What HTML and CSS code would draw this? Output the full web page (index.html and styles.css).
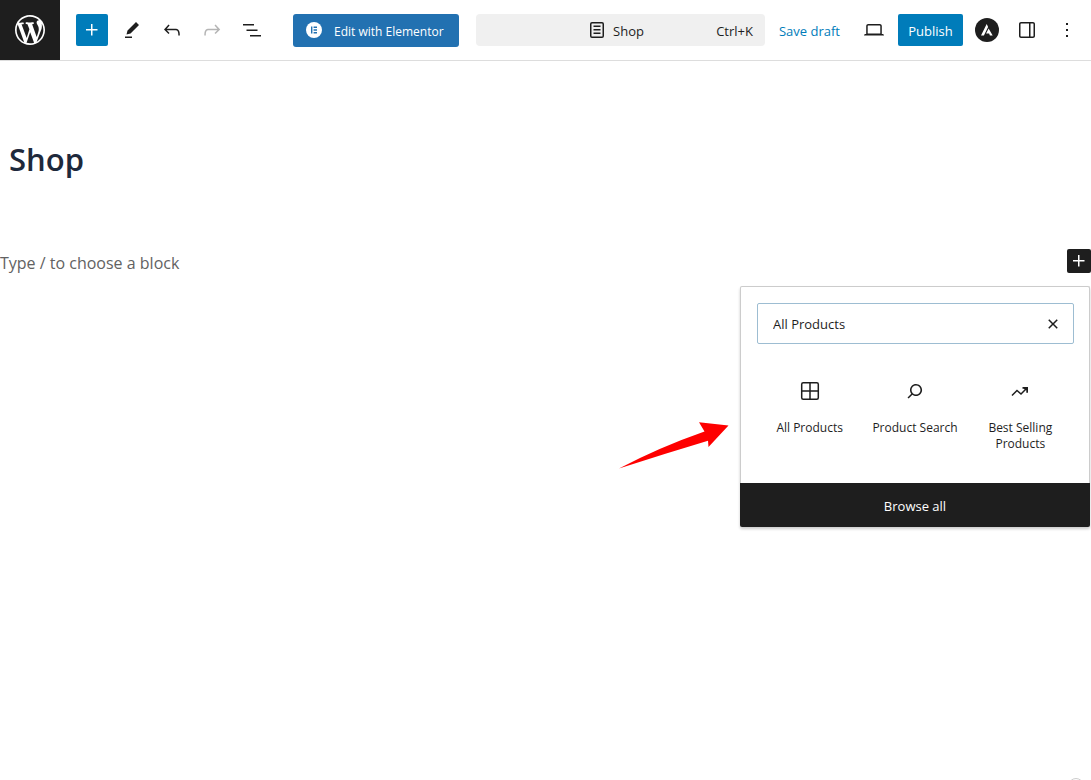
FILE: index.html
```html
<!DOCTYPE html>
<html lang="en">
<head>
<meta charset="utf-8">
<title>Shop</title>
<link rel="stylesheet" href="styles.css">
</head>
<body>
<div class="editor">
  <header class="header">
    <a class="site-link" href="#" aria-label="View pages">
      <svg width="36" height="36" viewBox="-2 -2 24 24"><path d="M20 10c0-5.51-4.49-10-10-10C4.48 0 0 4.49 0 10c0 5.52 4.48 10 10 10 5.51 0 10-4.48 10-10zM7.78 15.37L4.37 6.22c.55-.02 1.17-.08 1.17-.08.5-.06.44-1.13-.06-1.11 0 0-1.45.11-2.37.11-.18 0-.37 0-.58-.01C4.12 2.69 6.87 1.11 10 1.11c2.33 0 4.45.87 6.05 2.34-.68-.11-1.65.39-1.65 1.58 0 .74.45 1.36.9 2.1.35.61.55 1.36.55 2.46 0 1.49-1.4 5-1.4 5l-3.03-8.37c.54-.02.82-.17.82-.17.5-.05.44-1.25-.06-1.22 0 0-1.44.12-2.38.12-.87 0-2.33-.12-2.33-.12-.5-.03-.56 1.2-.06 1.22l.92.08 1.26 3.41zM17.41 10c.24-.64.74-1.87.43-4.25.7 1.29 1.05 2.71 1.05 4.25 0 3.29-1.73 6.24-4.4 7.78.97-2.59 1.94-5.2 2.92-7.78zM6.1 18.09C3.12 16.65 1.11 13.53 1.11 10c0-1.3.23-2.48.72-3.59C3.25 10.3 4.67 14.2 6.1 18.09zm4.03-6.63l2.58 6.98c-.86.29-1.76.45-2.71.45-.79 0-1.57-.11-2.29-.33.81-2.38 1.62-4.74 2.42-7.1z"/></svg>
    </a>
    <div class="tools">
      <button class="icon-button is-primary" type="button" aria-label="Toggle block inserter"><svg width="24" height="24" viewBox="0 0 24 24"><path d="M11 12.5V17.5H12.5V12.5H17.5V11H12.5V6H11V11H6V12.5H11Z"/></svg></button>
      <button class="icon-button" type="button" aria-label="Tools"><svg width="24" height="24" viewBox="0 0 24 24"><path d="m19 7-3-3-8.5 8.5-1 4 4-1L19 7Zm-7 11.5H5V20h7v-1.5Z"/></svg></button>
      <button class="icon-button" type="button" aria-label="Undo"><svg width="24" height="24" viewBox="0 0 24 24"><path d="M18.3 11.7c-.6-.6-1.4-.9-2.3-.9H6.7l2.9-3.3-1.1-1-4.5 5L8.5 16l1-1-2.7-2.7H16c.5 0 .9.2 1.3.5 1 1 1 3.4 1 4.5v.3h1.5v-.2c0-1.5 0-4.3-1.5-5.7z"/></svg></button>
      <button class="icon-button is-muted" type="button" aria-label="Redo"><svg width="24" height="24" viewBox="0 0 24 24"><path d="M15.6 6.5l-1.1 1 2.9 3.3H8c-.9 0-1.7.3-2.3.9-1.4 1.5-1.4 4.2-1.4 5.6v.2h1.5v-.3c0-1.1 0-3.5 1-4.5.3-.3.7-.5 1.3-.5h9.2L14.5 15l1.1 1.1 4.6-4.6-4.6-5z"/></svg></button>
      <button class="icon-button" type="button" aria-label="Document overview"><svg width="24" height="24" viewBox="0 0 24 24"><path d="M3 6h11v1.5H3V6Zm3.5 5.5h11V13h-11v-1.5ZM21 17H10v1.5h11V17Z"/></svg></button>
    </div>
    <button class="elementor-button" type="button">
      <svg width="16" height="16" viewBox="0 0 16 16"><circle cx="8" cy="8" r="8" fill="#fff"/><path d="M5 4.5h1.4v7H5zM7.6 4.5H11v1.4H7.6zM7.6 7.3H11v1.4H7.6zM7.6 10.1H11v1.4H7.6z" fill="#2271b1"/></svg>
      <span class="label">Edit with Elementor</span>
    </button>
    <button class="command-bar" type="button">
      <span class="document-title">
        <svg width="24" height="24" viewBox="0 0 24 24"><path fill-rule="evenodd" d="M15.5 7.5h-7V9h7V7.5Zm-7 3.5h7v1.5h-7V11Zm7 3.5h-7V16h7v-1.5ZM17 4H7a2 2 0 0 0-2 2v12a2 2 0 0 0 2 2h10a2 2 0 0 0 2-2V6a2 2 0 0 0-2-2ZM7 5.5h10a.5.5 0 0 1 .5.5v12a.5.5 0 0 1-.5.5H7a.5.5 0 0 1-.5-.5V6a.5.5 0 0 1 .5-.5Z"/></svg>
        <span class="label">Shop</span>
      </span>
      <span class="shortcut label">Ctrl+K</span>
    </button>
    <div class="settings">
      <button class="save-draft label" type="button">Save draft</button>
      <button class="icon-button" type="button" aria-label="View"><svg width="24" height="24" viewBox="0 0 24 24"><path d="M20.5 16h-.7V8c0-1.1-.9-2-2-2H6.2c-1.1 0-2 .9-2 2v8h-.7c-.8 0-1.5.7-1.5 1.5h20c0-.8-.7-1.5-1.5-1.5zM5.7 8c0-.3.2-.5.5-.5h11.6c.3 0 .5.2.5.5v7.6H5.7V8z"/></svg></button>
      <button class="publish label" type="button">Publish</button>
      <button class="icon-button" type="button" aria-label="Astra settings"><svg width="24" height="24" viewBox="0 0 24 24"><circle cx="12" cy="12" r="12"/><path fill="#fff" d="M11.7 6 13.1 8.9 8.9 17.4H6zM13.6 10.5 17.7 17.4H14.9L14.1 15.6H11.1Z"/></svg></button>
      <button class="icon-button" type="button" aria-label="Settings"><svg width="24" height="24" viewBox="0 0 24 24"><path d="M18 4H6c-1.1 0-2 .9-2 2v12c0 1.1.9 2 2 2h12c1.1 0 2-.9 2-2V6c0-1.1-.9-2-2-2zm-4 14.5H6c-.3 0-.5-.2-.5-.5V6c0-.3.2-.5.5-.5h8v13zm4.5-.5c0 .3-.2.5-.5.5h-2.5v-13H18c.3 0 .5.2.5.5v12z"/></svg></button>
      <button class="icon-button" type="button" aria-label="Options"><svg width="24" height="24" viewBox="0 0 24 24"><path d="M13 19h-2v-2h2v2zm0-6h-2v-2h2v2zm0-6h-2V5h2v2z"/></svg></button>
    </div>
  </header>

  <main class="canvas">
    <h1 class="page-title">Shop</h1>
    <div class="block-row">
      <p class="placeholder">Type / to choose a block</p>
      <button class="add-block" type="button" aria-label="Add block"><svg width="24" height="24" viewBox="0 0 24 24"><path d="M11 12.5V17.5H12.5V12.5H17.5V11H12.5V6H11V11H6V12.5H11Z"/></svg></button>

      <section class="inserter" aria-label="Block inserter">
        <div class="search">
          <input class="search-input" type="text" aria-label="Search for blocks" value="All Products">
          <button class="search-clear" type="button" aria-label="Reset search"><svg width="24" height="24" viewBox="0 0 24 24"><path d="M12 13.06l3.712 3.713 1.061-1.06L13.061 12l3.712-3.712-1.06-1.06L12 10.938 8.288 7.227l-1.061 1.06L10.939 12l-3.712 3.712 1.06 1.061L12 13.061z"/></svg></button>
        </div>
        <div class="results">
          <button class="block-item" type="button">
            <svg width="24" height="24" viewBox="0 0 24 24" class="outline"><rect x="3.7" y="3.7" width="16.6" height="16.6" rx="1.5"/><path d="M12 4v16M4 12h16"/></svg>
            All Products
          </button>
          <button class="block-item" type="button">
            <svg width="24" height="24" viewBox="0 0 24 24"><path d="M13 5c-3.3 0-6 2.7-6 6 0 1.4.5 2.7 1.3 3.7l-3.8 3.8 1.1 1.1 3.8-3.8c1 .8 2.3 1.3 3.7 1.3 3.3 0 6-2.7 6-6S16.3 5 13 5zm0 10.5c-2.5 0-4.5-2-4.5-4.5s2-4.5 4.5-4.5 4.5 2 4.5 4.5-2 4.5-4.5 4.5z"/></svg>
            Product Search
          </button>
          <button class="block-item" type="button">
            <svg width="24" height="24" viewBox="0 0 24 24" class="outline"><path d="m4 16.5 5-5 4 3.5 5.5-5.5"/><path class="solid" d="M14.5 8H20v5.8h-1.7v-2.6L15.5 9.7h-1z"/></svg>
            Best Selling Products
          </button>
        </div>
        <button class="browse-all label" type="button">Browse all</button>
      </section>

      <svg class="pointer" width="112" height="50" viewBox="0 0 112 50"><path fill="#fe0000" d="M1 48.5Q42 27 86.500 11.500L81 2.300 110.500 5.500 90.500 27 90 20.800Q46 34 1 48.500Z"/></svg>
    </div>
  </main>
  <span class="corner-ring"></span>
</div>
</body>
</html>
```
FILE: styles.css
```css
* {
  box-sizing: border-box;
}

body {
  margin: 0;
  background: #fff;
  color: #1e1e1e;
  font-family: "Open Sans", "Noto Sans", sans-serif;
  font-size: 13px;
}

button {
  margin: 0;
  padding: 0;
  border: 0;
  background: none;
  color: inherit;
  font: inherit;
  cursor: pointer;
}

svg {
  display: block;
  flex: none;
  fill: currentColor;
}

.editor {
  position: relative;
  min-height: 100vh;
  overflow: hidden;
}

.header {
  display: flex;
  align-items: center;
  height: 61px;
  padding-right: 8px;
  border-bottom: 1px solid #ddd;
}

.site-link {
  display: flex;
  flex: none;
  align-items: center;
  justify-content: center;
  width: 60px;
  height: 60px;
  background: #1e1e1e;
  color: #fff;
}

.tools {
  display: flex;
  gap: 8px;
  margin-left: 16px;
}

.icon-button {
  display: flex;
  flex: none;
  align-items: center;
  justify-content: center;
  width: 32px;
  height: 32px;
  border-radius: 2px;
}

.label {
  padding-top: 2px;
}

.is-primary {
  background: #007cba;
  color: #fff;
}

.is-muted {
  color: #b5b5b5;
}

.elementor-button {
  display: flex;
  flex: none;
  align-items: center;
  gap: 12px;
  width: 166px;
  height: 33px;
  margin-left: 25px;
  padding-left: 13px;
  border-radius: 3px;
  background: #2271b1;
  color: #fff;
  font-size: 12px;
  white-space: nowrap;
}

.command-bar {
  display: grid;
  grid-template-columns: 1fr auto 1fr;
  flex: 1;
  align-items: center;
  height: 32px;
  margin-left: 17px;
  padding-right: 12px;
  border-radius: 4px;
  background: #f0f0f0;
}

.document-title {
  display: flex;
  grid-column: 2;
  align-items: center;
  gap: 4px;
}

.shortcut {
  justify-self: end;
}

.settings {
  display: flex;
  flex: none;
  align-items: center;
  gap: 8px;
  margin-left: 14px;
}

.save-draft {
  margin-right: 10px;
  color: #007cba;
}

.publish {
  width: 65px;
  height: 32px;
  border-radius: 2px;
  background: #007cba;
  color: #fff;
}

.canvas {
  padding-top: 74px;
}

.page-title {
  margin: 0;
  padding-left: 9px;
  color: #1e293b;
  font-size: 31px;
  font-weight: 600;
  line-height: 48px;
}

.block-row {
  position: relative;
  display: flex;
  align-items: flex-start;
  justify-content: space-between;
  margin-top: 66px;
}

.placeholder {
  margin: 0;
  color: #626262;
  font-size: 16px;
  line-height: 28px;
}

.add-block {
  border-radius: 2px;
  background: #1e1e1e;
  color: #fff;
}

.inserter {
  position: absolute;
  top: 37px;
  right: 1px;
  width: 350px;
  border: 1px solid #ccc;
  border-bottom: 0;
  border-radius: 2px;
  background: #fff;
  box-shadow: 0 2px 3px rgba(0, 0, 0, 0.2);
}

.search {
  display: flex;
  align-items: center;
  height: 41px;
  margin: 16px 15px 0 16px;
  padding: 0 8px 0 15px;
  border: 1px solid #9dbdd2;
  border-radius: 2px;
}

.search-input {
  flex: 1;
  min-width: 0;
  padding: 0;
  border: 0;
  outline: 0;
  background: none;
  color: inherit;
  font: inherit;
}

.results {
  display: grid;
  grid-template-columns: repeat(3, 1fr);
  padding: 16px 16px 24px;
}

.block-item {
  display: flex;
  flex-direction: column;
  align-items: center;
  gap: 17px;
  padding: 19px 8px 7px;
  font-size: 12px;
  line-height: 16px;
}

.outline {
  fill: none;
  stroke: currentColor;
  stroke-width: 1.5;
}

.solid {
  fill: currentColor;
  stroke: none;
}

.browse-all {
  display: block;
  width: calc(100% + 2px);
  height: 44px;
  margin: 0 -1px;
  border-radius: 0 0 2px 2px;
  background: #1e1e1e;
  color: #fff;
}

.pointer {
  position: absolute;
  top: 171px;
  right: 361px;
}

.corner-ring {
  position: absolute;
  right: 7px;
  bottom: -14px;
  width: 16px;
  height: 16px;
  border: 1px solid #ccc;
  border-radius: 50%;
}
```
